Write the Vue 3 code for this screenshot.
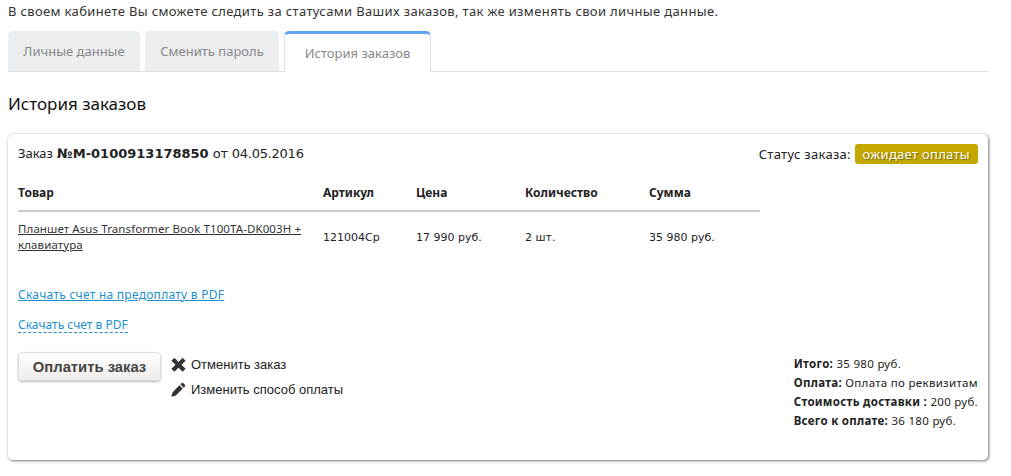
<script setup>
const tabs = [
  { label: 'Личные данные', active: false, cls: 'w1' },
  { label: 'Сменить пароль', active: false, cls: 'w2' },
  { label: 'История заказов', active: true, cls: 'w3' },
]
const totals = [
  { k: 'Итого:', v: '35 980 руб.' },
  { k: 'Оплата:', v: 'Оплата по реквизитам' },
  { k: 'Стоимость доставки :', v: '200 руб.' },
  { k: 'Всего к оплате:', v: '36 180 руб.' },
]
</script>

<template>
  <div class="page">
    <p class="intro">В своем кабинете Вы сможете следить за статусами Ваших заказов, так же изменять свои личные данные.</p>
    <div class="tabs">
      <div v-for="t in tabs" :key="t.label" class="tab" :class="[t.cls, { active: t.active }]">{{ t.label }}</div>
    </div>
    <h2 class="title">История заказов</h2>
    <div class="card">
      <div class="head">
        <div class="order"><span class="tah">Заказ</span> <b>№М-0100913178850</b> <span class="date">от 04.05.2016</span></div>
        <div class="status">Статус заказа: <span class="badge">ожидает оплаты</span></div>
      </div>
      <div class="table">
        <div class="row th">
          <div>Товар</div><div>Артикул</div><div>Цена</div><div>Количество</div><div>Сумма</div>
        </div>
        <div class="row td">
          <div><a class="plink">Планшет Asus Transformer Book T100TA-DK003H + клавиатура</a></div>
          <div>121004Ср</div><div>17 990 руб.</div><div>2 шт.</div><div>35 980 руб.</div>
        </div>
      </div>
      <div class="dl"><a class="solid">Скачать счет на предоплату в PDF</a></div>
      <div class="dl second"><a class="dashed">Скачать счет в PDF</a></div>
      <div class="bottom">
        <button class="pay">Оплатить заказ</button>
        <div class="actions">
          <div class="action">
            <svg class="ico" viewBox="0 0 16 16"><path d="M3.600.9 8 5.200 12.400.9 15.600 4 11.200 8.300l4.400 4.200-3.200 3.100L8 11.400l-4.400 4.200L.4 12.500l4.400-4.200L.4 4z" fill="#333"/></svg>
            Отменить заказ
          </div>
          <div class="action">
            <svg class="ico" viewBox="0 0 16 16"><path d="M11.300 1.200c.5-.5 1.200-.5 1.600-.1l2 2c.4.400.4 1.100-.1 1.600l-1.300 1.300-3.500-3.500zM9 3.500l3.500 3.500-7.300 7.300-4.400 1.300-.3-.3 1.200-4.500z" fill="#333"/></svg>
            Изменить способ оплаты
          </div>
        </div>
        <div class="totals">
          <div v-for="r in totals" :key="r.k"><b>{{ r.k }}</b> {{ r.v }}</div>
        </div>
      </div>
    </div>
  </div>
</template>

<style scoped>
.page {
  width: 980px;
  padding: 0 0 16px 8px;
  font-family: "Noto Sans", sans-serif;
  color: #333;
}
.intro { margin: 0; height: 31px; line-height: 22px; font-size: 13px; letter-spacing: .35px; white-space: nowrap; }
.tabs { display: flex; gap: 5px; height: 40px; border-bottom: 1px solid #ddd; }
.tab {
  background: #ebeef0;
  border-radius: 5px 5px 0 0;
  height: 40px;
  line-height: 40px;
  text-align: center;
  color: #888;
  font-size: 13px;
}
.w1 { width: 132px; }
.w2 { width: 134px; }
.w3 { width: 147px; }
.tab.active {
  background: #fff;
  border: 1px solid #d5e3ee;
  border-top: 3px solid #5ba4ef;
  border-bottom: 0;
  height: 41px;
  line-height: 38px;
  box-sizing: border-box;
}
.title { margin: 22px 0 0; height: 40px; font-weight: normal; font-size: 17px; line-height: 20px; color: #111; }
.card {
  box-sizing: border-box;
  height: 326px;
  padding: 10px 10px 0;
  background: #fff;
  border-radius: 5px;
  box-shadow: 1px 1px 3px rgba(0,0,0,.5), 0 0 2px rgba(0,0,0,.15);
  font-size: 12px;
}
.head { display: flex; justify-content: space-between; align-items: flex-start; font-size: 13px; height: 28px; line-height: 18px; }
.order { color: #222; font-family: "DejaVu Sans", sans-serif; }
.tah { font-family: "Noto Sans", sans-serif; }
.date { letter-spacing: -.25px; }
.status { color: #222; font-size: 13px; letter-spacing: .3px; }
.badge {
  display: inline-block;
  background: #c3a800;
  color: #fff;
  padding: 0 8px;
  border-radius: 3px;
  height: 20px;
  line-height: 20px;
  text-shadow: 1px 1px 1px rgba(0,0,0,.4);
}
.table { width: 742px; }
.row { display: grid; grid-template-columns: 305px 93px 109px 124px 1fr; }
.row > div:first-child { padding-right: 0; }
.th { font-weight: bold; height: 38px; line-height: 42px; border-bottom: 2px solid #ccc; color: #222; font-size: 12px; }
.td { align-items: center; height: 50px; line-height: 15px; font-size: 11px; color: #222; font-family: "DejaVu Sans", sans-serif; }
.plink { color: #333; text-decoration: underline; font-family: "Noto Sans", sans-serif; font-size: 11.500px; letter-spacing: .1px; }
.dl { margin-top: 25px; font-size: 12px; line-height: 16px; height: 16px; letter-spacing: .26px; }
.dl.second { margin-top: 14px; letter-spacing: 0; }
.solid { color: #1e8fd0; text-decoration: underline; }
.dashed { display: inline-block; line-height: 14px; color: #1e8fd0; border-bottom: 1px dashed #1e8fd0; }
.bottom { display: flex; margin-top: 19px; align-items: flex-start; }
.pay {
  width: 143px;
  height: 29px;
  padding: 0;
  border: 1px solid #ddd;
  border-radius: 4px;
  background: linear-gradient(#fff, #efecea);
  box-shadow: 0 1px 2px rgba(0,0,0,.3);
  font-family: "Liberation Sans", sans-serif;
  font-weight: bold;
  font-size: 14.800px;
  color: #444;
}
.actions { margin-left: 10px; font-size: 13px; font-family: "Liberation Sans", sans-serif; color: #222; }
.action { display: flex; align-items: center; gap: 5px; height: 26px; margin-top: -1px; }
.ico { width: 15px; height: 15px; flex: none; }
.totals { margin-left: auto; padding-top: 2px; font-size: 11.500px; line-height: 19px; color: #222; letter-spacing: .3px; white-space: nowrap; }
</style>
